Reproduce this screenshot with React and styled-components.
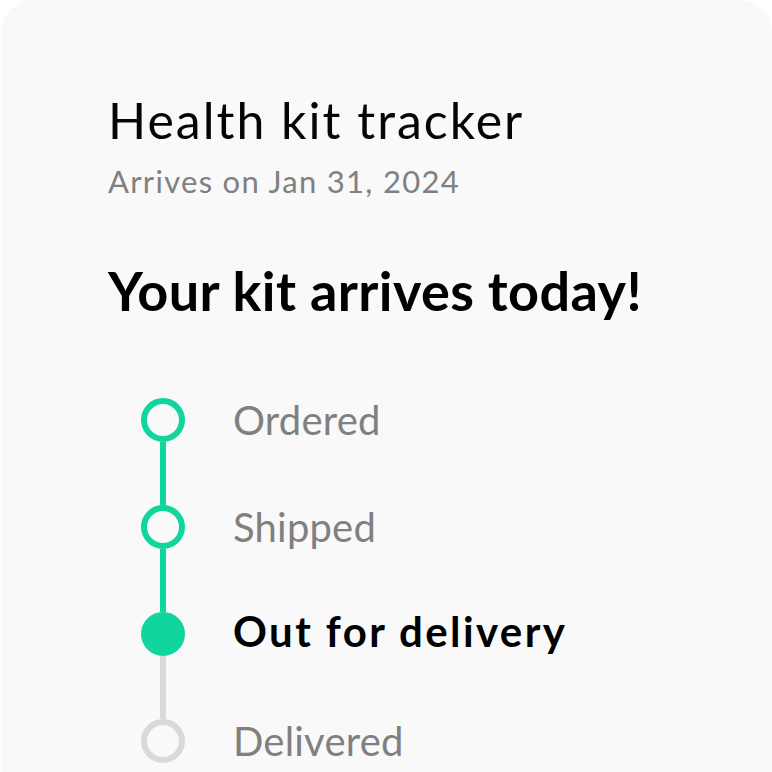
import React from "react";
import styled, { createGlobalStyle } from "styled-components";

const GlobalStyle = createGlobalStyle`
  html, body {
    margin: 0;
    padding: 0;
    background: #ffffff;
    overflow: hidden;
  }
  body {
    font-family: "Lato", "Noto Sans", sans-serif;
  }
`;

const Card = styled.section`
  margin-left: 1px;
  min-height: 800px;
  background-color: #f9f9f9;
  border-radius: 32px 32px 0 0;
  padding: 88px 40px 0 107px;
  box-sizing: border-box;
`;

const Title = styled.h1`
  margin: 0;
  font-size: 50px;
  line-height: 64px;
  font-weight: 400;
  letter-spacing: 2px;
  color: #050505;
`;

const Subtitle = styled.p`
  margin: 9px 0 0;
  font-size: 31px;
  line-height: 40px;
  letter-spacing: 1.3px;
  color: #808080;
`;

const Status = styled.h2`
  margin: 58px 0 0;
  font-size: 54px;
  line-height: 64px;
  font-weight: 700;
  letter-spacing: 0.4px;
  color: #000;
`;

const Steps = styled.ol`
  list-style: none;
  margin: 43px 0 0;
  padding: 0 0 0 33px;
`;

const Step = styled.li`
  display: flex;
  align-items: stretch;
  height: 107px;
`;

const Marker = styled.div`
  width: 44px;
  display: flex;
  flex-direction: column;
  align-items: center;
`;

const Segment = styled.span`
  flex: 1;
  width: 6px;
  background: ${(p) => p.$color || "transparent"};
`;

const Dot = styled.span`
  width: 44px;
  height: 44px;
  box-sizing: border-box;
  border-radius: 50%;
  border: 6px solid ${(p) => p.$color};
  background: ${(p) => (p.$filled ? p.$color : "transparent")};
`;

const Label = styled.span`
  align-self: center;
  margin: ${(p) => (p.$active ? "-5px" : "0")} 0 0 48px;
  font-size: ${(p) => (p.$active ? "42px" : "40px")};
  font-weight: ${(p) => (p.$active ? 700 : 400)};
  letter-spacing: ${(p) => (p.$active ? "2.4px" : "0.2px")};
  color: ${(p) => (p.$active ? "#000" : "#808080")};
`;

const GREEN = "#10d69e";
const GREY = "#d9d9d9";

const steps = [
  { label: "Ordered", done: true },
  { label: "Shipped", done: true },
  { label: "Out for delivery", done: true, active: true },
  { label: "Delivered", done: false },
];

const App = () => {
  return (
    <>
      <GlobalStyle />
      <Card>
        <Title>Health kit tracker</Title>
        <Subtitle>Arrives on Jan 31, 2024</Subtitle>
        <Status>Your kit arrives today!</Status>
        <Steps>
          {steps.map((s, i) => {
            const color = s.done ? GREEN : GREY;
            const prev = steps[i - 1];
            const next = steps[i + 1];
            return (
              <Step key={s.label}>
                <Marker>
                  <Segment $color={prev ? color : null} />
                  <Dot $color={color} $filled={s.active} />
                  <Segment
                    $color={next ? (next.done ? GREEN : GREY) : null}
                  />
                </Marker>
                <Label $active={s.active}>{s.label}</Label>
              </Step>
            );
          })}
        </Steps>
      </Card>
    </>
  );
};

export default App;
